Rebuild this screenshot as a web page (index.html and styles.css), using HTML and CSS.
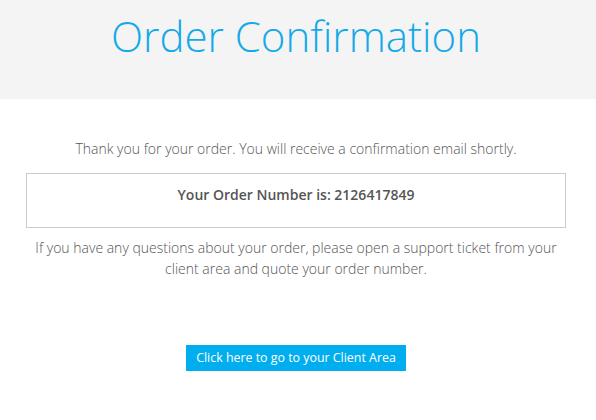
FILE: index.html
```html
<!DOCTYPE html>
<html>
<head>
<meta charset="utf-8">
<link rel="stylesheet" href="styles.css">
</head>
<body>
<header class="hero">
  <h1 class="title">Order Confirmation</h1>
</header>
<main class="content">
  <p class="lead">Thank you for your order. You will receive a confirmation email shortly.</p>
  <div class="order-box">
    <p class="order-number">Your Order Number is: 2126417849</p>
  </div>
  <p class="note">If you have any questions about your order, please open a support ticket from your client area and quote your order number.</p>
  <div class="actions">
    <a class="btn" href="#">Click here to go to your Client Area</a>
  </div>
</main>
</body>
</html>
```
FILE: styles.css
```css
* { box-sizing: border-box; }
html, body { margin: 0; padding: 0; background: #fff; }
body {
  font-family: "Open Sans", "Liberation Sans", sans-serif;
  color: #555;
  font-size: 14px;
}
.hero {
  background: #f4f4f4;
  height: 99px;
  padding: 8px 30px 0 26px;
}
.title {
  margin: 0;
  text-align: center;
  font-weight: 300;
  font-size: 42px;
  line-height: 56px;
  color: #14a9e8;
}
.content {
  padding: 39px 30px 0 26px;
  display: flex;
  flex-direction: column;
  align-items: center;
}
.lead {
  margin: 0;
  font-weight: 300;
  line-height: 21px;
  text-align: center;
}
.order-box {
  width: 540px;
  margin-top: 14px;
  border: 1px solid #ccc;
  height: 55px;
  padding-top: 11px;
}
.order-number {
  margin: 0;
  text-align: center;
  font-weight: 600;
  line-height: 20px;
}
.note {
  margin: 9px 0 0;
  font-weight: 300;
  line-height: 21px;
  text-align: center;
}
.actions {
  margin-top: 66px;
}
.btn {
  display: inline-block;
  background: #00aeef;
  color: #fff;
  text-decoration: none;
  font-weight: 400;
  font-size: 12.4px;
  line-height: 26px;
  padding: 0 10px;
}
```
